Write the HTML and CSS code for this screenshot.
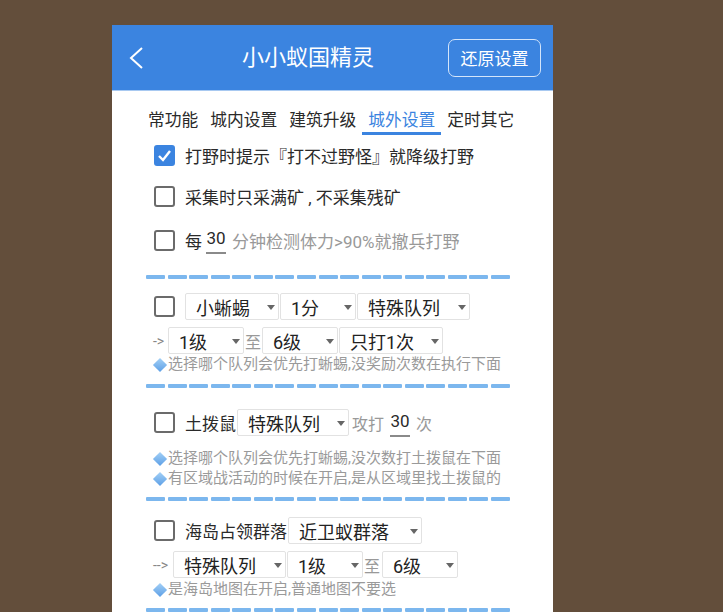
FILE: index.html
```html
<!DOCTYPE html>
<html lang="zh">
  <head>
    <meta charset="UTF-8" />
    <meta name="viewport" content="width=device-width, initial-scale=1.0" />
    <title>小小蚁国精灵</title>
    <link rel="stylesheet" href="styles.css">
  </head>
  <body>
    <div class="phone">
      <header class="bar">
        <div class="back">
          <svg width="16" height="22" viewBox="0 0 16 22">
            <polyline points="13,1 2,11 13,21" fill="none" stroke="#fff" stroke-width="2" />
          </svg>
        </div>
        <h1 class="title">小小蚁国精灵</h1>
        <button class="reset">还原设置</button>
      </header>

      <nav class="tabs">
        <span class="tab">常功能</span>
        <span class="tab">城内设置</span>
        <span class="tab">建筑升级</span>
        <span class="tab on">城外设置</span>
        <span class="tab">定时其它</span>
      </nav>

      <div class="row r1">
        <span class="box on">
          <svg width="17" height="17" viewBox="0 0 17 17">
            <polyline points="3,9 7,13 14,4" fill="none" stroke="#fff" stroke-width="2.4" />
          </svg>
        </span>
        <span>打野时提示『打不过野怪』就降级打野</span>
      </div>
      <div class="row r2">
        <span class="box"></span>
        <span>采集时只采满矿 , 不采集残矿</span>
      </div>
      <div class="row r3">
        <span class="box"></span>
        <span class="pre">每</span>
        <span class="num">30</span>
        <span class="grey">分钟检测体力&gt;90%就撤兵打野</span>
      </div>

      <div class="dash d1"><i></i><i></i><i></i><i></i><i></i><i></i><i></i><i></i><i></i><i></i><i></i><i></i><i></i><i></i><i></i><i></i><i></i></div>

      <div class="sel-row s2a">
        <span class="box"></span>
        <span class="spin w94">小蜥蜴</span>
        <span class="spin w76">1分</span>
        <span class="spin w113">特殊队列</span>
      </div>
      <div class="sel-row sub">
        <span class="lead w14">-&gt;</span>
        <span class="spin w76">1级</span>
        <span class="to w16">至</span>
        <span class="spin w76">6级</span>
        <span class="spin w104">只打1次</span>
      </div>
      <p class="hint h2"><span class="dia"></span>选择哪个队列会优先打蜥蜴,没奖励次数在执行下面</p>

      <div class="dash d2"><i></i><i></i><i></i><i></i><i></i><i></i><i></i><i></i><i></i><i></i><i></i><i></i><i></i><i></i><i></i><i></i><i></i></div>

      <div class="sel-row s3a">
        <span class="box"></span>
        <span class="label">土拨鼠</span>
        <span class="spin w112">特殊队列</span>
        <span class="grey small after">攻打</span>
        <span class="num gap6">30</span>
        <span class="grey small gap6">次</span>
      </div>
      <p class="hint h3"><span class="dia"></span>选择哪个队列会优先打蜥蜴,没次数打土拨鼠在下面</p>
      <p class="hint"><span class="dia"></span>有区域战活动的时候在开启,是从区域里找土拨鼠的</p>

      <div class="dash d3"><i></i><i></i><i></i><i></i><i></i><i></i><i></i><i></i><i></i><i></i><i></i><i></i><i></i><i></i><i></i><i></i><i></i></div>

      <div class="sel-row s4a">
        <span class="box"></span>
        <span class="label">海岛占领群落</span>
        <span class="spin w134">近卫蚁群落</span>
      </div>
      <div class="sel-row sub">
        <span class="lead w19">--&gt;</span>
        <span class="spin w113">特殊队列</span>
        <span class="spin w76">1级</span>
        <span class="to w17">至</span>
        <span class="spin w76">6级</span>
      </div>
      <p class="hint h4"><span class="dia"></span>是海岛地图在开启,普通地图不要选</p>

      <div class="dash d4"><i></i><i></i><i></i><i></i><i></i><i></i><i></i><i></i><i></i><i></i><i></i><i></i><i></i><i></i><i></i><i></i><i></i></div>
    </div>
  </body>
</html>
```

FILE: styles.css
```css
body {
  margin: 0;
  background-color: #634e3b;
  overflow: hidden;
  font-family: Roboto, "Noto Sans CJK SC", sans-serif;
  color: #2a2a2a;
}

.phone {
  margin: 25px 0 0 112px;
  width: 441px;
  height: 587px;
  background-color: #fff;
  overflow: hidden;
}

/* top bar */
.bar {
  height: 65px;
  background-color: #3b84e0;
  border-bottom: 1px solid #a8c9f1;
  display: flex;
  align-items: center;
  color: #fff;
}
.back {
  width: 50px;
  display: flex;
  justify-content: center;
}
.title {
  flex: 1;
  margin: 0;
  padding-left: 6px;
  text-align: center;
  font-size: 22px;
  font-weight: normal;
  line-height: 30px;
}
.reset {
  margin-right: 12px;
  width: 93px;
  height: 38px;
  border: 1.5px solid #d4e5fa;
  border-radius: 7px;
  background: transparent;
  color: #fff;
  font-family: inherit;
  font-size: 17px;
  padding: 0;
}

/* tabs */
.tabs {
  display: flex;
  padding: 17px 0 0 30px;
  font-size: 16.75px;
  line-height: 24px;
}
.tab {
  padding: 0 6px;
  border-bottom: 3px solid transparent;
}
.tab.on {
  color: #3b84e0;
  border-color: #3b84e0;
}

/* rows */
.row,
.sel-row {
  display: flex;
  align-items: center;
  padding-left: 42px;
  font-size: 17px;
}
.r1,
.r2 {
  height: 41px;
}
.r3 {
  height: 46px;
}
.sel-row {
  height: 27px;
}
.s2a {
  margin-top: 14px;
}
.s3a {
  margin-top: 21px;
}
.s4a {
  margin-top: 16px;
}
.sub {
  margin-top: 7px;
}

.box {
  flex: none;
  width: 21px;
  height: 21px;
  box-sizing: border-box;
  border: 2px solid #6b6b6b;
  border-radius: 3px;
  margin-right: 10px;
}
.box.on {
  background-color: #3b84e0;
  border-color: #3b84e0;
  display: flex;
  align-items: center;
  justify-content: center;
}

.pre {
  margin-right: 4px;
}
.num {
  width: 20px;
  text-align: center;
  line-height: 24px;
  padding-bottom: 2px;
  border-bottom: 2px solid #8a8a8a;
}
.grey {
  color: #999;
  margin-left: 6px;
}
.small {
  font-size: 16px;
}
.after {
  margin-left: 2px;
}
.gap6 {
  margin-left: 6px;
}
.label {
  margin-right: 1px;
}

/* spinners */
.spin {
  position: relative;
  flex: none;
  display: flex;
  align-items: center;
  box-sizing: border-box;
  height: 27px;
  padding-left: 10px;
  margin-right: 1px;
  border: 1px solid #e2e2e2;
  border-radius: 2px;
  font-size: 18px;
  color: #222;
}
.spin::after {
  content: "";
  position: absolute;
  right: 3px;
  top: 11px;
  border-left: 4px solid transparent;
  border-right: 4px solid transparent;
  border-top: 5px solid #666;
}
.w76 { width: 76px; }
.w94 { width: 94px; }
.w104 { width: 104px; }
.w112 { width: 112px; }
.w113 { width: 113px; }
.w134 { width: 134px; }

.lead {
  font-size: 14px;
  color: #888;
  margin-left: -1px;
}
.w14 { width: 15px; }
.w19 { width: 20px; }
.to {
  font-size: 16px;
  color: #999;
  margin-right: 1px;
}
.w16 { width: 16px; }
.w17 { width: 17px; }

/* hints */
.hint {
  margin: 0;
  padding-left: 41px;
  font-size: 15px;
  line-height: 20px;
  color: #9a9a9a;
}
.h3 {
  margin-top: 12px;
}
.h4 {
  margin-top: 1px;
}
.dia {
  display: inline-block;
  width: 10px;
  height: 10px;
  margin: 0 3px 0 2px;
  transform: rotate(45deg);
  background: linear-gradient(135deg, #a3d0f6, #5d9fe6);
  vertical-align: -1px;
}

/* dashed separators */
.dash {
  display: flex;
  justify-content: space-between;
  width: 364px;
  margin-left: 34px;

  i {
    width: 19px;
    height: 4px;
    border-radius: 1px;
    background-color: #7cb7ee;
  }
}
.d1 {
  margin-top: 12px;
}
.d2 {
  margin-top: 10px;
}
.d3 {
  margin-top: 9px;
}
.d4 {
  margin-top: 9px;
}
```
